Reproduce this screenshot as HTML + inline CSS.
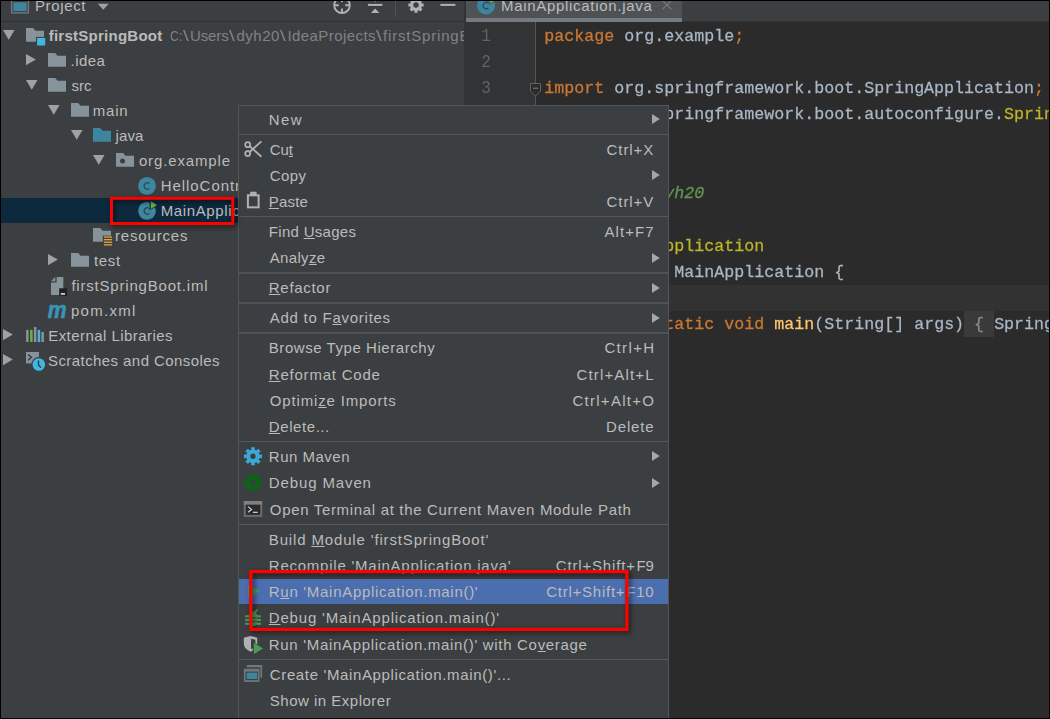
<!DOCTYPE html>
<html>
<head>
<meta charset="utf-8">
<style>
html,body{margin:0;padding:0;}
body{width:1050px;height:719px;overflow:hidden;background:#000;position:relative;font-family:"Liberation Sans",sans-serif;}
.abs{position:absolute;}
#panel{left:1px;top:1px;width:463px;height:717px;background:#3c3f41;overflow:hidden;position:absolute;}
#editor{left:464px;top:1px;width:585px;height:717px;background:#2b2b2b;overflow:hidden;position:absolute;}
#shift{position:absolute;left:-1px;top:-1px;}
#shift2{position:absolute;left:-464px;top:-1px;}
.t{position:absolute;white-space:nowrap;color:#bbbbbb;font-size:15px;line-height:25px;height:25px;}
.g{color:#828282;}
.b{font-weight:bold;}
svg{position:absolute;overflow:visible;}
.ln{position:absolute;left:481px;transform:scale(0.96,1.1);transform-origin:4px 17.4px;color:#606366;font-family:"Liberation Mono",monospace;font-size:16.667px;line-height:26px;height:26px;white-space:pre;}
.code{position:absolute;left:544.3px;transform:scaleY(1.04);transform-origin:0 17.4px;-webkit-text-stroke:0.25px;color:#a9b7c6;font-family:"Liberation Mono",monospace;font-size:16.667px;line-height:26px;height:26px;white-space:pre;}
.k{color:#cc7832;}
.an{color:#bbb529;}
.dc{color:#629755;font-style:italic;}
.dc b{font-weight:bold;}
.fn{color:#ffc66d;}
.fold{color:#8c8c8c;}
#menu{position:absolute;left:238px;top:105px;width:431px;height:620px;background:#3c3f41;border:1px solid #555555;box-sizing:border-box;}
.mi{position:absolute;white-space:nowrap;color:#bbbbbb;font-size:15px;line-height:26px;height:26px;}
.sep{position:absolute;left:239px;width:429px;height:1px;background:#515151;}
u{text-decoration:underline;text-underline-offset:1px;text-decoration-thickness:1px;}
.red{position:absolute;border:3px solid #ff0000;box-sizing:border-box;box-shadow:2px 2px 4px rgba(0,0,0,.55), inset 2px 2px 4px rgba(0,0,0,.55);}
</style>
</head>
<body>
<div id="panel"><div id="shift">
<div class="abs" style="left:1px;top:21px;width:464px;height:1px;background:#2f3133"></div>
<div class="abs" style="left:1px;top:198px;width:464px;height:25px;background:#0d293e"></div>
<svg style="left:3.00px;top:29.90px" width="12" height="10" viewBox="0 0 12 10"><path d="M0 0 H11.5 L5.75 9.8Z" fill="#9fa1a3"/></svg>
<svg style="left:25.90px;top:28.35px" width="20" height="18" viewBox="0 0 20 18"><path d="M0 0 H7.1 L9.6 2.7 H18 V13.7 H0Z" fill="#87939a"/><rect x="10" y="8.9" width="10" height="10" fill="#3c3f41"/><rect x="11.1" y="9.9" width="8.1" height="7.6" fill="#40b6e0"/></svg>
<svg style="left:25.90px;top:54.30px" width="10" height="12" viewBox="0 0 10 12"><path d="M0 0 L9.8 5.6 L0 11.2Z" fill="#9fa1a3"/></svg>
<svg style="left:48.00px;top:53.35px" width="20" height="18" viewBox="0 0 20 18"><path d="M0 0 H7.1 L9.6 2.7 H18 V13.7 H0Z" fill="#87939a"/></svg>
<svg style="left:25.70px;top:79.90px" width="12" height="10" viewBox="0 0 12 10"><path d="M0 0 H11.5 L5.75 9.8Z" fill="#9fa1a3"/></svg>
<svg style="left:48.00px;top:78.35px" width="20" height="18" viewBox="0 0 20 18"><path d="M0 0 H7.1 L9.6 2.7 H18 V13.7 H0Z" fill="#87939a"/></svg>
<svg style="left:48.30px;top:104.90px" width="12" height="10" viewBox="0 0 12 10"><path d="M0 0 H11.5 L5.75 9.8Z" fill="#9fa1a3"/></svg>
<svg style="left:70.90px;top:103.35px" width="20" height="18" viewBox="0 0 20 18"><path d="M0 0 H7.1 L9.6 2.7 H18 V13.7 H0Z" fill="#87939a"/></svg>
<svg style="left:70.80px;top:129.90px" width="12" height="10" viewBox="0 0 12 10"><path d="M0 0 H11.5 L5.75 9.8Z" fill="#9fa1a3"/></svg>
<svg style="left:93.00px;top:128.35px" width="20" height="18" viewBox="0 0 20 18"><path d="M0 0 H7.1 L9.6 2.7 H18 V13.7 H0Z" fill="#3e86a0"/></svg>
<svg style="left:93.00px;top:154.90px" width="12" height="10" viewBox="0 0 12 10"><path d="M0 0 H11.5 L5.75 9.8Z" fill="#9fa1a3"/></svg>
<svg style="left:116.00px;top:153.35px" width="20" height="18" viewBox="0 0 20 18"><path d="M0 0 H7.1 L9.6 2.7 H18 V13.7 H0Z" fill="#87939a"/><circle cx="6.5" cy="8.1" r="2.5" fill="#3c3f41"/></svg>
<svg style="left:0;top:0" width="1050" height="719"><circle cx="147.0" cy="185.9" r="8.9" fill="#3e86a0"/><path d="M149.5 183.6 A3.2 3.2 0 1 0 149.5 188.4" fill="none" stroke="#2c4753" stroke-width="1.2"/></svg>
<svg style="left:0;top:0" width="1050" height="719"><circle cx="147.0" cy="210.9" r="8.9" fill="#3e86a0"/><path d="M149.5 208.6 A3.2 3.2 0 1 0 149.5 213.4" fill="none" stroke="#2c4753" stroke-width="1.2"/><path d="M149.7 200.3 L158.5 205.3 L149.7 210.3Z" fill="#0d293e"/><path d="M150.8 201.3 L157.0 205.1 L150.8 209.0Z" fill="#62b543"/></svg>
<svg style="left:93.00px;top:228.35px" width="20" height="18" viewBox="0 0 20 18"><path d="M0 0 H7.1 L9.6 2.7 H18 V13.7 H0Z" fill="#87939a"/><rect x="9.8" y="7.6" width="10" height="11" fill="#3c3f41"/><rect x="10.9" y="8.4" width="8.2" height="1.3" fill="#e8a33d"/><rect x="10.9" y="11.0" width="8.2" height="1.3" fill="#e8a33d"/><rect x="10.9" y="13.6" width="8.2" height="1.3" fill="#e8a33d"/><rect x="10.9" y="16.2" width="8.2" height="1.3" fill="#e8a33d"/></svg>
<svg style="left:47.90px;top:254.30px" width="10" height="12" viewBox="0 0 10 12"><path d="M0 0 L9.8 5.6 L0 11.2Z" fill="#9fa1a3"/></svg>
<svg style="left:71.00px;top:253.35px" width="20" height="18" viewBox="0 0 20 18"><path d="M0 0 H7.1 L9.6 2.7 H18 V13.7 H0Z" fill="#87939a"/></svg>
<svg style="left:50.90px;top:277.00px" width="18" height="20" viewBox="0 0 18 20"><path d="M4.3 0 L0 4.3 H4.3Z" fill="#87939a"/><path d="M5.6 0 H12.3 V17.9 H0 V5.6 H5.6Z" fill="#87939a"/><rect x="8.2" y="11.3" width="7.9" height="7.5" fill="#231f20"/><rect x="9.8" y="16.1" width="4.2" height="1.6" fill="#e0e0e0"/></svg>
<svg style="left:47.70px;top:304.50px" width="20" height="14" viewBox="0 0 20 14"><text x="-0.2" y="12.6" font-family="Liberation Sans" font-weight="bold" font-style="italic" font-size="23.8" fill="#3a93b6" stroke="#3a93b6" stroke-width="0.7" textLength="18.8" lengthAdjust="spacingAndGlyphs">m</text></svg>
<svg style="left:2.90px;top:329.30px" width="10" height="12" viewBox="0 0 10 12"><path d="M0 0 L9.8 5.6 L0 11.2Z" fill="#9fa1a3"/></svg>
<svg style="left:26.10px;top:327.00px" width="19" height="15" viewBox="0 0 19 15"><rect x="0.1" y="2.9" width="2.5" height="12.1" fill="#87939a"/><rect x="4.1" y="2.9" width="2.5" height="12.1" fill="#62b543"/><rect x="7.9" y="0" width="2.5" height="15" fill="#87939a"/><rect x="11.7" y="2.9" width="2.5" height="12.1" fill="#40b6e0"/><rect x="15.4" y="5" width="2.5" height="10" fill="#87939a"/></svg>
<svg style="left:2.90px;top:354.30px" width="10" height="12" viewBox="0 0 10 12"><path d="M0 0 L9.8 5.6 L0 11.2Z" fill="#9fa1a3"/></svg>
<svg style="left:26.10px;top:352.00px" width="20" height="20" viewBox="0 0 20 20"><rect x="0" y="0" width="13" height="11.4" fill="#87939a"/><path d="M2.2 2.4 L5.4 5.3 L2.2 8.2" fill="none" stroke="#2f3335" stroke-width="1.3"/><circle cx="12.8" cy="12.5" r="7.4" fill="#3c3f41"/><circle cx="12.8" cy="12.5" r="6.3" fill="#40b6e0"/><path d="M12.5 8.6 V12.9 L15 15.6" fill="none" stroke="#2f3335" stroke-width="1.3"/></svg>
<svg style="left:0;top:0" width="40" height="20"><rect x="10.9" y="-4" width="18.2" height="17.6" fill="#6e777d"/><rect x="12.4" y="-4" width="15.2" height="16.1" fill="#3c3f41"/><rect x="13.4" y="2.3" width="13.2" height="8.8" fill="#3e86a0"/></svg>
<svg style="left:0;top:0" width="470" height="22"><path d="M97.8 3.7 H108.7 L103.25 9.7Z" fill="#9fa1a3"/><circle cx="342" cy="5.2" r="7.8" fill="none" stroke="#afb1b3" stroke-width="1.9"/><path d="M342 -3 V2 M342 8.4 V13 M334 5.2 H338.8 M345.2 5.2 H350" stroke="#afb1b3" stroke-width="1.9" fill="none"/><rect x="367.9" y="3.9" width="14.5" height="2" fill="#afb1b3"/><path d="M371 12.9 L375.1 8.6 L379.3 12.9Z" fill="#afb1b3"/><rect x="374.4" y="-2" width="1.5" height="3.5" fill="#afb1b3"/><rect x="395" y="0" width="1" height="17" fill="#515456"/><path d="M414.42 -0.79 L414.42 -2.64 L417.58 -2.64 L417.58 -0.79 L418.97 -0.21 L420.28 -1.52 L422.52 0.72 L421.21 2.03 L421.79 3.42 L423.64 3.42 L423.64 6.58 L421.79 6.58 L421.21 7.97 L422.52 9.28 L420.28 11.52 L418.97 10.21 L417.58 10.79 L417.58 12.64 L414.42 12.64 L414.42 10.79 L413.03 10.21 L411.72 11.52 L409.48 9.28 L410.79 7.97 L410.21 6.58 L408.36 6.58 L408.36 3.42 L410.21 3.42 L410.79 2.03 L409.48 0.72 L411.72 -1.52 L413.03 -0.21Z M418.70 5.00 A2.7 2.7 0 1 0 413.30 5.00 A2.7 2.7 0 1 0 418.70 5.00Z" fill="#afb1b3" fill-rule="evenodd"/><rect x="440.4" y="3.9" width="15" height="2" fill="#afb1b3"/></svg>
<div class="t" style="left:34.90px;top:-7.30px;letter-spacing:0.647px;">Project</div>
<div class="t b" style="left:48.70px;top:23.00px;letter-spacing:0.258px;">firstSpringBoot</div>
<div class="t g" style="left:169.70px;top:23.00px;transform:scaleX(0.818);transform-origin:0 50%;">C</div>
<div class="t g" style="left:179.45px;top:23.00px;transform:scaleX(0.850);transform-origin:0 50%;">:</div>
<div class="t g" style="left:182.90px;top:23.00px;transform:scaleX(1.380);transform-origin:0 50%;">\</div>
<div class="t g" style="left:189.90px;top:23.00px;letter-spacing:-0.092px;">Users</div>
<div class="t g" style="left:228.60px;top:23.00px;transform:scaleX(1.380);transform-origin:0 50%;">\</div>
<div class="t g" style="left:236.50px;top:23.00px;letter-spacing:0.493px;">dyh20</div>
<div class="t g" style="left:280.20px;top:23.00px;transform:scaleX(1.360);transform-origin:0 50%;">\</div>
<div class="t g" style="left:287.50px;top:23.00px;letter-spacing:0.420px;">IdeaProjects</div>
<div class="t g" style="left:375.50px;top:23.00px;transform:scaleX(1.420);transform-origin:0 50%;">\</div>
<div class="t g" style="left:383.10px;top:23.00px;letter-spacing:0.802px;">firstSpringBoot</div>
<div class="t" style="left:70.50px;top:48.00px;letter-spacing:0.479px;">.idea</div>
<div class="t" style="left:71.50px;top:73.00px;letter-spacing:0.052px;">src</div>
<div class="t" style="left:92.70px;top:98.00px;letter-spacing:0.810px;">main</div>
<div class="t" style="left:115.50px;top:123.00px;letter-spacing:0.108px;">java</div>
<div class="t" style="left:138.90px;top:148.00px;letter-spacing:0.860px;">org.example</div>
<div class="t" style="left:160.70px;top:173.00px;letter-spacing:0.950px;">HelloController</div>
<div class="t" style="left:160.70px;top:198.00px;letter-spacing:0.621px;">MainApplication</div>
<div class="t" style="left:115.00px;top:223.00px;letter-spacing:0.830px;">resources</div>
<div class="t" style="left:94.00px;top:248.00px;letter-spacing:0.663px;">test</div>
<div class="t" style="left:71.40px;top:273.00px;letter-spacing:0.801px;">firstSpringBoot.iml</div>
<div class="t" style="left:71.00px;top:298.00px;letter-spacing:1.276px;">pom.xml</div>
<div class="t" style="left:48.20px;top:323.00px;letter-spacing:0.446px;">External Libraries</div>
<div class="t" style="left:48.00px;top:348.00px;letter-spacing:0.424px;">Scratches and Consoles</div>
</div></div>
<div id="editor"><div id="shift2">
<div class="abs" style="left:465px;top:1px;width:585px;height:20px;background:#3c3f41"></div>
<div class="abs" style="left:465px;top:21px;width:585px;height:1px;background:#323232"></div>
<div class="abs" style="left:464px;top:1px;width:2px;height:720px;background:#313335"></div>
<div class="abs" style="left:466px;top:1px;width:216px;height:21px;background:#4e5254"></div>
<div class="abs" style="left:466px;top:18px;width:216px;height:4px;background:#747a80"></div>
<div class="abs" style="left:465px;top:22px;width:71px;height:700px;background:#313335"></div>
<div class="abs" style="left:535px;top:22px;width:1px;height:700px;background:#555555"></div>
<div class="abs" style="left:536px;top:285px;width:514px;height:26px;background:#323232"></div>
<div class="abs" style="left:964px;top:311px;width:30px;height:26px;background:#3a3a3a"></div>
<div class="ln" style="top:23.50px">1</div>
<div class="ln" style="top:49.75px">2</div>
<div class="ln" style="top:76.00px">3</div>
<div class="ln" style="top:102.25px"></div>
<div class="ln" style="top:128.50px"></div>
<div class="ln" style="top:154.75px"></div>
<div class="ln" style="top:181.00px"></div>
<div class="ln" style="top:207.25px"></div>
<div class="ln" style="top:233.50px"></div>
<div class="ln" style="top:259.75px"></div>
<div class="ln" style="top:286.00px"></div>
<div class="ln" style="top:312.25px"></div>
<div class="code" style="top:23.50px"><span class="k">package </span>org.example<span class="k">;</span></div>
<div class="code" style="top:76.00px"><span class="k">import </span>org.springframework.boot.SpringApplication<span class="k">;</span></div>
<div class="code" style="top:102.25px"><span class="k">import </span>org.springframework.boot.autoconfigure.<span class="an">SpringBootApplication</span><span class="k">;</span></div>
<div class="code" style="top:154.75px"><span class="dc">/**</span></div>
<div class="code" style="top:181.00px"><span class="dc"> * <b>@author</b> dyh20</span></div>
<div class="code" style="top:207.25px"><span class="dc"> */</span></div>
<div class="code" style="top:233.50px"><span class="an">@SpringBootApplication</span></div>
<div class="code" style="top:259.75px"><span class="k">public class </span>MainApplication {</div>
<div class="code" style="top:312.25px">    <span class="k">public static void </span><span class="fn">main</span>(String[] args)<span class="fold"> { </span>SpringApplication.run(MainApplication.class, args);</div>
<svg style="left:0;top:0" width="1050" height="719"><circle cx="486.0" cy="5.5" r="9.0" fill="#3e86a0"/><path d="M488.5 3.2 A3.2 3.2 0 1 0 488.5 8.0" fill="none" stroke="#2c4753" stroke-width="1.2"/><path d="M488.7 -5.1 L497.5 -0.09999999999999964 L488.7 4.9Z" fill="#4e5254"/><path d="M489.8 -4.1 L496.0 -0.2999999999999998 L489.8 3.6Z" fill="#62b543"/></svg>
<svg style="left:0;top:0" width="700" height="22"><path d="M662.6 0.6 L671.3 9.3 M671.3 0.6 L662.6 9.3" stroke="#74777a" stroke-width="1.3" fill="none"/></svg>
<svg style="left:529.70px;top:83.00px" width="12" height="14" viewBox="0 0 12 14"><path d="M0.5 0.5 H10.5 V8 L5.5 13 L0.5 8Z" fill="#2b2b2b" stroke="#606366" stroke-width="1"/><rect x="3" y="4.7" width="5" height="1" fill="#808285"/></svg>
<div class="t" style="left:501.00px;top:-7.30px;letter-spacing:0.693px;">MainApplication.java</div>
</div></div>
<div id="menu"></div>
<svg style="left:651.5px;top:113.83px" width="8" height="11"><path d="M0 0 L7.8 5 L0 10Z" fill="#a4a6a8"/></svg>
<div class="sep" style="top:134px;height:1px;background:#555759"></div>
<svg style="left:0;top:0" width="1050" height="719"><circle cx="247.7" cy="144.625" r="2.5" fill="none" stroke="#afb1b3" stroke-width="1.7"/><circle cx="247.7" cy="153.525" r="2.5" fill="none" stroke="#afb1b3" stroke-width="1.7"/><path d="M249.6 146.125 L261.4 156.725 M249.6 152.025 L261.4 141.425" stroke="#afb1b3" stroke-width="1.8" fill="none"/></svg>
<svg style="left:651.5px;top:170.07px" width="8" height="11"><path d="M0 0 L7.8 5 L0 10Z" fill="#a4a6a8"/></svg>
<svg style="left:0;top:0" width="1050" height="719"><rect x="247.9" y="195.325" width="10.7" height="12" fill="none" stroke="#afb1b3" stroke-width="2"/><rect x="250.2" y="191.725" width="6.4" height="4.2" fill="#afb1b3"/></svg>
<div class="sep" style="top:216px;height:1px;background:#555759"></div>
<svg style="left:651.5px;top:252.57px" width="8" height="11"><path d="M0 0 L7.8 5 L0 10Z" fill="#a4a6a8"/></svg>
<div class="sep" style="top:272px;height:2px;background:#4f5254"></div>
<svg style="left:651.5px;top:282.57px" width="8" height="11"><path d="M0 0 L7.8 5 L0 10Z" fill="#a4a6a8"/></svg>
<div class="sep" style="top:302px;height:2px;background:#4f5254"></div>
<svg style="left:651.5px;top:312.57px" width="8" height="11"><path d="M0 0 L7.8 5 L0 10Z" fill="#a4a6a8"/></svg>
<div class="sep" style="top:332px;height:2px;background:#4f5254"></div>
<div class="sep" style="top:441px;height:1px;background:#555759"></div>
<svg style="left:651.5px;top:451.32px" width="8" height="11"><path d="M0 0 L7.8 5 L0 10Z" fill="#a4a6a8"/></svg>
<svg style="left:0;top:0" width="1050" height="719"><path d="M251.23 449.86 L251.13 447.32 L254.87 447.32 L254.77 449.86 L256.32 450.51 L258.05 448.64 L260.69 451.27 L258.82 453.01 L259.46 454.56 L262.01 454.46 L262.01 458.19 L259.46 458.09 L258.82 459.64 L260.69 461.38 L258.05 464.01 L256.32 462.14 L254.77 462.79 L254.87 465.33 L251.13 465.33 L251.23 462.79 L249.68 462.14 L247.95 464.01 L245.31 461.38 L247.18 459.64 L246.54 458.09 L243.99 458.19 L243.99 454.46 L246.54 454.56 L247.18 453.01 L245.31 451.27 L247.95 448.64 L249.68 450.51Z M255.70 456.32 A2.7 2.7 0 1 0 250.30 456.32 A2.7 2.7 0 1 0 255.70 456.32Z" fill="#3aa7d6" fill-rule="evenodd"/></svg>
<svg style="left:651.5px;top:477.57px" width="8" height="11"><path d="M0 0 L7.8 5 L0 10Z" fill="#a4a6a8"/></svg>
<svg style="left:0;top:0" width="1050" height="719"><path d="M251.23 476.11 L251.13 473.57 L254.87 473.57 L254.77 476.11 L256.32 476.76 L258.05 474.89 L260.69 477.52 L258.82 479.26 L259.46 480.81 L262.01 480.71 L262.01 484.44 L259.46 484.34 L258.82 485.89 L260.69 487.63 L258.05 490.26 L256.32 488.39 L254.77 489.04 L254.87 491.58 L251.13 491.58 L251.23 489.04 L249.68 488.39 L247.95 490.26 L245.31 487.63 L247.18 485.89 L246.54 484.34 L243.99 484.44 L243.99 480.71 L246.54 480.81 L247.18 479.26 L245.31 477.52 L247.95 474.89 L249.68 476.76Z M255.70 482.57 A2.7 2.7 0 1 0 250.30 482.57 A2.7 2.7 0 1 0 255.70 482.57Z" fill="#0e6316" fill-rule="evenodd"/></svg>
<svg style="left:0;top:0" width="1050" height="719"><rect x="243.8" y="501.025" width="18.4" height="15.8" fill="#6e6e6e"/><rect x="243.8" y="501.025" width="18.4" height="3.6" fill="#808080"/><rect x="245.8" y="504.72499999999997" width="14.5" height="10.2" fill="#2b2b2b"/><path d="M248 506.625 L251.6 509.42499999999995 L248 512.225" fill="none" stroke="#d0d0d0" stroke-width="1.15"/><rect x="253" y="511.72499999999997" width="4.6" height="1.2" fill="#d0d0d0"/></svg>
<div class="sep" style="top:524px;height:1px;background:#58595b"></div>
<div class="abs" style="left:239px;top:579px;width:429px;height:25px;background:#4b6eaf"></div>
<svg style="left:0;top:0" width="1050" height="719"><path d="M248 584.625 L259.9 591.225 L248 597.925Z" fill="#499c54"/></svg>
<svg style="left:0;top:0" width="1050" height="719"><rect x="245.1" y="615.27" width="15.8" height="2.1" fill="#499c54"/><rect x="245.1" y="618.98" width="15.8" height="2.1" fill="#499c54"/><rect x="245.1" y="622.77" width="15.8" height="2.1" fill="#499c54"/><ellipse cx="253.3" cy="618.88" rx="4.7" ry="7.4" fill="#499c54"/><path d="M254.6 612.58 L257.5 609.58" stroke="#499c54" stroke-width="1.7"/><rect x="248.6" y="617.42" width="9.4" height="1.0" fill="#3c3f41" opacity="0.85"/><rect x="248.6" y="621.12" width="9.4" height="1.0" fill="#3c3f41" opacity="0.85"/></svg>
<svg style="left:0;top:0" width="1050" height="719"><path d="M243.8 637.625 L250.5 636.025 L257.2 637.625 V643.525 Q257.2 649.025 250.5 651.625 Q243.8 649.025 243.8 643.525Z" fill="#afb1b3"/><path d="M251 638.625 L255.4 639.625 V644.025 Q255.2 647.225 251 649.3249999999999Z" fill="#3c3f41"/><path d="M252.8 641.525 L264 648.425 L252.8 655.225Z" fill="#3c3f41"/><path d="M253.8 642.725 L263 648.425 L253.8 654.125Z" fill="#499c54"/></svg>
<div class="sep" style="top:659px;height:1px;background:#555759"></div>
<svg style="left:0;top:0" width="1050" height="719"><path d="M246.7 664.925 H262.1 V677.8249999999999 H260.4 V667.3249999999999 H246.7Z" fill="#6e777d"/><rect x="243.9" y="668.7249999999999" width="15.6" height="13.2" fill="#6e777d"/><rect x="245.6" y="671.625" width="12.3" height="8.5" fill="#3c3f41"/><rect x="246.7" y="672.625" width="10.4" height="6.4" fill="#3e86a0"/></svg>
<div class="mi" style="left:268.80px;top:106.72px;letter-spacing:1.363px;">New</div>
<div class="mi" style="left:269.80px;top:136.72px;letter-spacing:-0.087px;">Cu<u>t</u></div>
<div class="mi" style="left:606.60px;top:136.72px;letter-spacing:0.923px;">Ctrl+X</div>
<div class="mi" style="left:269.80px;top:162.97px;letter-spacing:0.428px;">Copy</div>
<div class="mi" style="left:268.80px;top:189.22px;letter-spacing:0.171px;"><u>P</u>aste</div>
<div class="mi" style="left:606.60px;top:189.22px;letter-spacing:0.923px;">Ctrl+V</div>
<div class="mi" style="left:268.80px;top:219.22px;letter-spacing:0.299px;">Find <u>U</u>sages</div>
<div class="mi" style="left:604.40px;top:219.22px;letter-spacing:1.095px;">Alt+F7</div>
<div class="mi" style="left:269.80px;top:245.47px;letter-spacing:0.313px;">Analy<u>z</u>e</div>
<div class="mi" style="left:268.80px;top:275.48px;letter-spacing:0.701px;"><u>R</u>efactor</div>
<div class="mi" style="left:269.80px;top:305.48px;letter-spacing:0.739px;">Add to F<u>a</u>vorites</div>
<div class="mi" style="left:268.80px;top:335.48px;letter-spacing:0.557px;">Browse Type Hierarchy</div>
<div class="mi" style="left:604.40px;top:335.48px;letter-spacing:1.363px;">Ctrl+H</div>
<div class="mi" style="left:268.80px;top:361.73px;letter-spacing:0.778px;"><u>R</u>eformat Code</div>
<div class="mi" style="left:576.40px;top:361.73px;letter-spacing:1.172px;">Ctrl+Alt+L</div>
<div class="mi" style="left:269.80px;top:387.98px;letter-spacing:0.843px;">Optimi<u>z</u>e Imports</div>
<div class="mi" style="left:572.40px;top:387.98px;letter-spacing:1.283px;">Ctrl+Alt+O</div>
<div class="mi" style="left:268.80px;top:414.23px;letter-spacing:0.576px;"><u>D</u>elete...</div>
<div class="mi" style="left:606.10px;top:414.23px;letter-spacing:0.837px;">Delete</div>
<div class="mi" style="left:268.80px;top:444.23px;letter-spacing:0.504px;">Run Maven</div>
<div class="mi" style="left:268.80px;top:470.48px;letter-spacing:0.875px;">Debug Maven</div>
<div class="mi" style="left:269.80px;top:496.73px;letter-spacing:0.674px;">Open Terminal at the Current Maven Module Path</div>
<div class="mi" style="left:268.80px;top:526.73px;letter-spacing:0.847px;">Build <u>M</u>odule 'firstSpringBoot'</div>
<div class="mi" style="left:268.80px;top:552.98px;letter-spacing:0.759px;">R<u>e</u>compile 'MainApplication.java'</div>
<div class="mi" style="left:555.80px;top:552.98px;letter-spacing:0.830px;">Ctrl+Shift+</div>
<div class="mi" style="left:636.60px;top:552.98px;letter-spacing:-0.363px;">F9</div>
<div class="mi" style="left:268.80px;top:579.23px;letter-spacing:0.700px;">R<u>u</u>n 'MainApplication.main()'</div>
<div class="mi" style="left:546.30px;top:579.23px;letter-spacing:0.740px;">Ctrl+Shift+</div>
<div class="mi" style="left:626.20px;top:579.23px;letter-spacing:0.798px;">F10</div>
<div class="mi" style="left:268.80px;top:605.48px;letter-spacing:0.814px;"><u>D</u>ebug 'MainApplication.main()'</div>
<div class="mi" style="left:268.80px;top:631.73px;letter-spacing:0.686px;">Run 'MainApplication.main()' with Co<u>v</u>erage</div>
<div class="mi" style="left:269.80px;top:661.73px;letter-spacing:0.633px;">Create 'MainApplication.main()'...</div>
<div class="mi" style="left:269.80px;top:687.98px;letter-spacing:0.501px;">Show in Explorer</div>
<svg style="left:0;top:0;filter:drop-shadow(2px 2px 2.5px rgba(0,0,0,.65))" width="1050" height="719"><rect x="111.5" y="198.3" width="121.3" height="25.2" fill="none" stroke="#fe0000" stroke-width="3"/><rect x="250.8" y="571.6" width="376.1" height="57.8" fill="none" stroke="#fe0000" stroke-width="3.2"/></svg>
<div class="abs" style="left:0;top:718px;width:1050px;height:1px;background:#000"></div>
</body>
</html>
